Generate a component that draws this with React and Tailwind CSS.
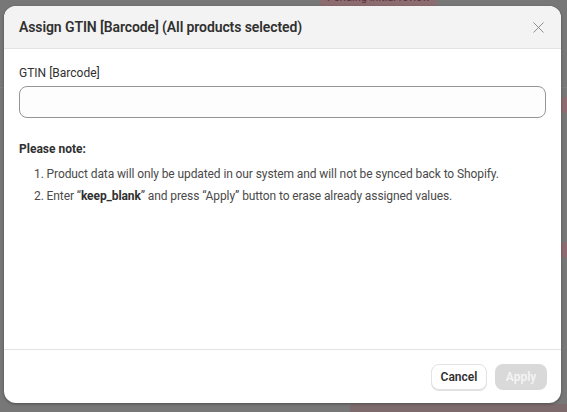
import { X } from 'lucide-react';

const font = { fontFamily: 'Roboto, "Noto Sans", sans-serif' };

export default function App() {
  return (
    <div className="relative w-[567px] h-[412px] overflow-hidden bg-[#777777]" style={font}>
      {/* page behind the overlay */}
      <div className="absolute left-[320px] -top-[10px] h-[16px] rounded bg-[#8c6c71] text-[11px] leading-[16px] text-[#5b3036] px-[7px] whitespace-nowrap">
        Pending initial review
      </div>
      <div className="absolute left-[561px] top-[97px] w-[20px] h-[16px] rounded bg-[#8c6c71]" />
      <div className="absolute left-[561px] top-[242px] w-[20px] h-[16px] rounded bg-[#8c6c71]" />
      <div className="absolute left-[350px] top-[404px] w-[220px] h-[16px] rounded bg-[#7c6a6d]" />
      <div className="absolute left-0 right-0 top-[87px] h-px bg-[#7f7f7f]" />

      {/* modal */}
      <div className="relative pl-[4px] pt-[6px]">
        <div className="w-[557px] h-[397px] bg-white rounded-xl overflow-hidden flex flex-col shadow-[0_1px_3px_rgba(0,0,0,0.35)]">
          <div className="h-[43px] shrink-0 bg-[#f3f3f3] border-b border-[#e3e3e3] flex items-center justify-between pl-[15px] pr-[13px]">
            <h2 className="text-[14px] font-semibold text-[#303030] tracking-[-0.1px]">
              Assign GTIN [Barcode] (All products selected)
            </h2>
            <X size={19} strokeWidth={1.2} className="text-[#8a8a8a]" />
          </div>

          <div className="flex-1 px-[15px] pt-[16px]">
            <label className="block text-[12px] leading-[16px] text-[#303030] mb-[5px]">GTIN [Barcode]</label>
            <div className="h-[32px] rounded-lg border border-[#959595] bg-[#fdfdfd]" />

            <p className="mt-[23px] text-[12px] leading-[16px] font-bold text-[#303030]">Please note:</p>
            <ol className="mt-[6px] pl-[15px] text-[12px] leading-[22px] text-[#4a4a4a] tracking-[-0.1px]">
              <li>1. Product data will only be updated in our system and will not be synced back to Shopify.</li>
              <li>
                2. Enter “<span className="font-bold text-[#303030]">keep_blank</span>” and press “Apply” button to erase already assigned values.
              </li>
            </ol>
          </div>

          <div className="h-[54px] shrink-0 border-t border-[#e3e3e3] flex items-center justify-end gap-[8px] pr-[14px]">
            <button className="h-[26px] w-[56px] rounded-lg bg-white border border-[#e3e3e3] shadow-[0_1px_0_rgba(0,0,0,0.12)] text-[12px] font-semibold text-[#303030]">
              Cancel
            </button>
            <button className="h-[26px] w-[52px] rounded-lg bg-[#d9d9d9] text-[12px] font-semibold text-[#f4f4f4]">
              Apply
            </button>
          </div>
        </div>
      </div>
    </div>
  );
}
